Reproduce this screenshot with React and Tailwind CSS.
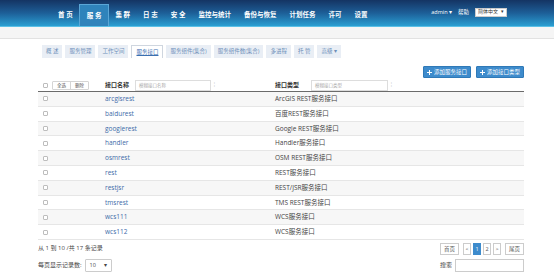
import React from "react";

const navItems = ["首 页", "服 务", "集 群", "日 志", "安 全", "监控与统计", "备份与恢复", "计划任务", "许可", "设置"];
const tabs = ["概 述", "服务管理", "工作空间", "服务接口", "服务组件(集合)", "服务组件数(集合)", "多进程", "托 管"];
const rows = [
  ["arcgisrest", "ArcGIS REST服务接口"],
  ["baidurest", "百度REST服务接口"],
  ["googlerest", "Google REST服务接口"],
  ["handler", "Handler服务接口"],
  ["osmrest", "OSM REST服务接口"],
  ["rest", "REST服务接口"],
  ["restjsr", "REST/JSR服务接口"],
  ["tmsrest", "TMS REST服务接口"],
  ["wcs111", "WCS服务接口"],
  ["wcs112", "WCS服务接口"],
];

function Check() {
  return <span className="block w-[5px] h-[5px] border border-[#bdbdbd] bg-white rounded-[1px]" />;
}

function Plus() {
  return (
    <svg width="5" height="5" viewBox="0 0 10 10" className="shrink-0">
      <path d="M4 0h2v4h4v2H6v4H4V6H0V4h4z" fill="white" />
    </svg>
  );
}

export default function App() {
  return (
    <div
      className="w-[554px] h-[275px] bg-white overflow-hidden text-[#333]"
      style={{ fontFamily: '"Open Sans", "Noto Sans CJK SC", sans-serif' }}
    >
      {/* header */}
      <div className="h-[27px] flex items-end bg-gradient-to-b from-[#143463] via-[#1d5f98] to-[#2a9fd2] border-b border-[#5bc0e6]">
        <div className="flex items-end ml-[51.5px]">
          {navItems.map((n, i) => (
            <div
              key={n}
              className={
                "h-[22px] flex items-center px-[6.5px] text-[6.5px] font-bold text-white whitespace-pre " +
                (i === 1 ? "bg-[#2f83bb] border border-b-0 border-[#5aa6d6]" : "")
              }
            >
              {n}
            </div>
          ))}
        </div>
        <div className="ml-auto mr-[47px] h-full flex items-center gap-[6px] text-[5.5px] text-white pb-[2px]">
          <span>admin ▾</span>
          <span>帮助</span>
          <span className="w-[32px] h-[9px] bg-white text-[#333] border border-[#ccc] flex items-center justify-between px-[2px] text-[5px]">
            <span>简体中文</span>
            <span>▾</span>
          </span>
        </div>
      </div>

      {/* gray strip */}
      <div className="h-[12px] bg-[#f5f5f5] border-b border-[#e2e2e2]" />

      {/* tabs */}
      <div className="flex gap-[3px] ml-[42px] mt-[6px] h-[13px]">
        {tabs.map((t, i) => (
          <div
            key={t}
            className={
              "px-[4px] flex items-center text-[5.5px] whitespace-pre " +
              (i === 3
                ? "bg-white border border-b-0 border-[#cfd6df] text-[#3b6fb0] underline"
                : "bg-[#e9eef5] text-[#6d8fb9]")
            }
          >
            {t}
          </div>
        ))}
        <div className="px-[4px] flex items-center text-[5.5px] bg-[#e9eef5] text-[#6d8fb9]">高级 ▾</div>
      </div>

      {/* action buttons */}
      <div className="flex justify-end gap-[5px] mr-[30px] mt-[8px] h-[12px]">
        {["添加服务接口", "添加接口类型"].map((b) => (
          <div
            key={b}
            className="w-[48px] flex items-center justify-center gap-[2px] bg-[#3d8bcc] border border-[#2f79b7] rounded-[1px] text-white text-[5.5px]"
          >
            <Plus />
            <span>{b}</span>
          </div>
        ))}
      </div>

      {/* table */}
      <div className="ml-[38px] w-[486px] mt-[1px]">
        <div className="h-[13px] flex items-center border-b-[1.5px] border-[#6b6b6b] text-[6px]">
          <div className="w-[14px] flex justify-center">
            <Check />
          </div>
          <div className="w-[52px] flex">
            <div className="flex border border-[#d5d5d5] rounded-[1px] h-[9px] text-[4.5px] text-[#555]">
              <span className="px-[4px] flex items-center border-r border-[#d5d5d5]">全选</span>
              <span className="px-[4px] flex items-center">删除</span>
            </div>
          </div>
          <div className="w-[171px] flex items-center pl-[1px]">
            <span className="font-bold text-[6px] text-[#333]">接口名称</span>
            <span className="ml-[6px] w-[76px] h-[11px] border border-[#ddd] flex items-center px-[3px] text-[4.5px] text-[#aaa]">
              模糊接口名称
            </span>
            <span className="ml-[2px] text-[5px] text-[#bbb]">¦</span>
          </div>
          <div className="flex-1 flex items-center">
            <span className="font-bold text-[6px] text-[#333]">接口类型</span>
            <span className="ml-[12px] w-[77px] h-[11px] border border-[#ddd] flex items-center px-[3px] text-[4.5px] text-[#aaa]">
              模糊接口类型
            </span>
            <span className="ml-[2px] text-[5px] text-[#bbb]">¦</span>
          </div>
        </div>
        {rows.map(([n, t], i) => (
          <div
            key={n + i}
            className={
              "h-[14.8px] flex items-center border-b border-[#e6e6e6] text-[6.5px] " +
              (i % 2 === 0 ? "bg-[#f7f7f7]" : "bg-white")
            }
          >
            <div className="w-[14px] flex justify-center">
              <Check />
            </div>
            <div className="w-[52px]" />
            <div className="w-[171px] pl-[1px] text-[#3c6aa8]">{n}</div>
            <div className="flex-1 text-[#444]">{t}</div>
          </div>
        ))}

        {/* footer */}
        <div className="h-[18px] flex items-center justify-between text-[6px] text-[#444]">
          <span>从 1 到 10 /共 17 条记录</span>
          <div className="flex items-center gap-[2px] text-[5.5px] text-[#555]">
            <span className="h-[12px] px-[3px] flex items-center border border-[#ccc] bg-white">首页</span>
            <span className="ml-[2px] h-[12px] w-[8px] flex items-center justify-center border border-[#ccc] bg-white">&lt;</span>
            <span className="h-[12px] w-[8px] flex items-center justify-center border border-[#3d8bcc] bg-[#3d8bcc] text-white">1</span>
            <span className="h-[12px] w-[8px] flex items-center justify-center border border-[#ccc] bg-white">2</span>
            <span className="h-[12px] w-[8px] flex items-center justify-center border border-[#ccc] bg-white">&gt;</span>
            <span className="ml-[2px] h-[12px] px-[3px] flex items-center border border-[#ccc] bg-white">尾页</span>
          </div>
        </div>
        <div className="h-[15px] flex items-center justify-between text-[6px] text-[#444]">
          <div className="flex items-center">
            <span>每页显示记录数:</span>
            <span className="ml-[3px] w-[27px] h-[13px] border border-[#ccc] rounded-[1px] flex items-center justify-between px-[4px] text-[5.5px]">
              <span>10</span>
              <span>▾</span>
            </span>
          </div>
          <div className="flex items-center">
            <span>搜索</span>
            <span className="ml-[3px] w-[69px] h-[13px] border border-[#ccc] bg-white" />
          </div>
        </div>
      </div>
    </div>
  );
}
